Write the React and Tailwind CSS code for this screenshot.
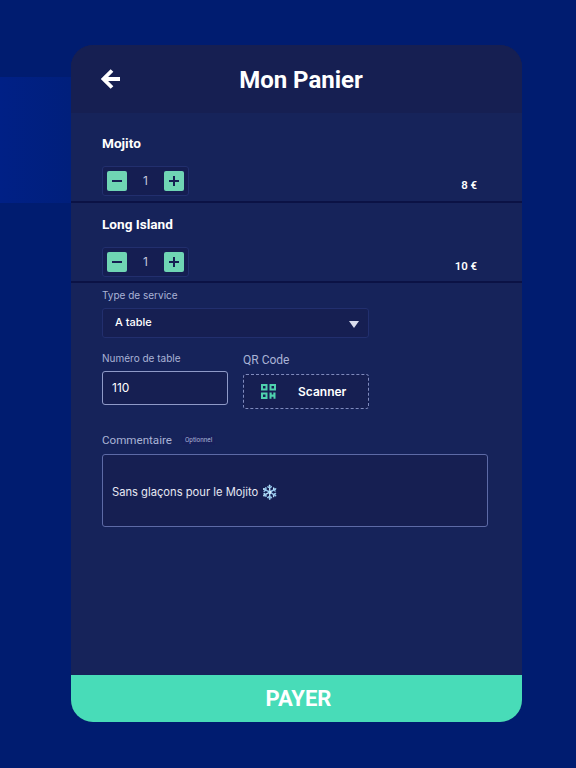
const barlow = "font-['Roboto',sans-serif]";
const inter = "font-['Inter',sans-serif]";

function Stepper() {
  return (
    <div className="flex h-[30px] w-[87px] items-center justify-between rounded-[3px] border border-[#222f6e] bg-[#151e52] px-[4px]">
      <button className="flex h-[20px] w-[20px] items-center justify-center rounded-[2px] bg-[#6fd5b4]">
        <svg width="12" height="12" viewBox="0 0 12 12"><path d="M1 6h10" stroke="#151e52" strokeWidth="2" /></svg>
      </button>
      <span className={`${inter} text-[12px] text-[#c3c8de]`}>1</span>
      <button className="flex h-[20px] w-[20px] items-center justify-center rounded-[2px] bg-[#6fd5b4]">
        <svg width="12" height="12" viewBox="0 0 12 12"><path d="M1 6h10M6 1v10" stroke="#151e52" strokeWidth="2" /></svg>
      </button>
    </div>
  );
}

function CartItem({ name, price, height, nameTop }) {
  return (
    <div className={`${height} border-b-2 border-[#0b1245] pl-[31px]`}>
      <h2 className={`${barlow} ${nameTop} text-[13.6px] leading-[18px] font-bold text-white`}>{name}</h2>
      <div className="mt-[14px] flex items-start justify-between">
        <Stepper />
        <span className={`${barlow} mt-[11px] mr-[45px] text-[11.4px] leading-[16px] font-semibold text-white`}>{price}</span>
      </div>
    </div>
  );
}

function QrIcon() {
  return (
    <svg width="15" height="15" viewBox="0 0 15 15" fill="none">
      <g stroke="#4fd2ae" strokeWidth="2">
        <rect x="1" y="1" width="4.5" height="4.5" />
        <rect x="9.5" y="1" width="4.5" height="4.5" />
        <rect x="1" y="9.5" width="4.5" height="4.5" />
      </g>
      <path d="M8.5 8.5h2.2v2h1.6v-2h2.2v6.2h-2v-2h-2v2h-2z" fill="#4fd2ae" />
    </svg>
  );
}

export default function App() {
  return (
    <div className="relative h-[768px] w-[576px] overflow-hidden bg-[#001c70] pt-[45px] pl-[71px]">
      <div className="absolute top-[77px] left-0 h-[126px] w-[71px] bg-gradient-to-r from-[#002086] to-[#001f7c]" />
      <div className="relative flex h-[677px] w-[451px] flex-col overflow-hidden rounded-[22px] bg-[#16235a]">
        <header className="relative flex h-[68px] shrink-0 items-center justify-center bg-[#161f52] pt-[2px] pl-[9px]">
          <svg className="absolute top-[23px] left-[30px]" width="20" height="22" viewBox="0 0 20 22" fill="none">
            <path d="M19 11H4M11 2.5 2.5 11l8.5 8.5" stroke="#fff" strokeWidth="3.8" />
          </svg>
          <h1 className={`${barlow} text-[24px] leading-[30px] font-bold text-white`}>Mon Panier</h1>
        </header>

        <CartItem name="Mojito" price="8 €" height="h-[90px]" nameTop="pt-[21px]" />
        <CartItem name="Long Island" price="10 €" height="h-[80px]" nameTop="pt-[12px]" />

        <div className="flex-1 pt-[6px] pl-[31px]">
          <label className={`${inter} block text-[10px] leading-[13px] text-[#aab3d6]`}>Type de service</label>
          <div className="mt-[6px] flex h-[30px] w-[267px] items-center justify-between rounded-[3px] border border-[#222f6e] bg-[#161f52] pr-[9px] pl-[12px]">
            <span className={`${inter} pb-[2px] text-[11px] font-medium text-white`}>A table</span>
            <span className="mt-[2px] h-0 w-0 border-x-[5.5px] border-t-[7px] border-x-transparent border-t-[#d9dded]" />
          </div>

          <div className="mt-[14px] flex gap-[15px]">
            <div>
              <label className={`${inter} block text-[10px] leading-[13px] text-[#aab3d6]`}>Numéro de table</label>
              <div className={`${inter} mt-[6px] flex h-[34px] w-[126px] items-center rounded-[3px] border border-[#8f9ac8] bg-[#161f52] pl-[9px] text-[12px] text-white`}>110</div>
            </div>
            <div>
              <label className={`${barlow} mt-[1px] block text-[12px] leading-[14px] text-[#aab3d6]`}>QR Code</label>
              <button className="mt-[7px] flex h-[35px] w-[126px] items-center rounded-[3px] border-[1.5px] border-dashed border-[#7f8abd] bg-[#161f52] pl-[17px]">
                <QrIcon />
                <span className={`${inter} ml-[22px] text-[12px] font-semibold text-white`}>Scanner</span>
              </button>
            </div>
          </div>

          <div className="mt-[24px] flex items-center">
            <label className={`${barlow} text-[11.6px] leading-[14px] text-[#aab3d6]`}>Commentaire</label>
            <span className={`${barlow} ml-[10px] rounded-[2px] bg-[#17205a] px-[3px] text-[6.4px] leading-[10px] text-[#aab3d6]`}>Optionnel</span>
          </div>
          <div className={`${inter} mt-[7px] flex h-[73px] w-[386px] items-center rounded-[3px] border border-[#5d6aa6] bg-[#161f52] pt-[3px] pl-[9px] text-[11.2px] text-[#e6e8f2]`}>
            Sans glaçons pour le Mojito <span className="ml-[3px] text-[14px] leading-[14px] text-[#bfe0fa]">❄️</span>
          </div>
        </div>

        <button className={`${barlow} h-[47px] shrink-0 bg-[#48dcb8] pl-[4px] text-[22px] font-bold text-white`}>PAYER</button>
      </div>
    </div>
  );
}
